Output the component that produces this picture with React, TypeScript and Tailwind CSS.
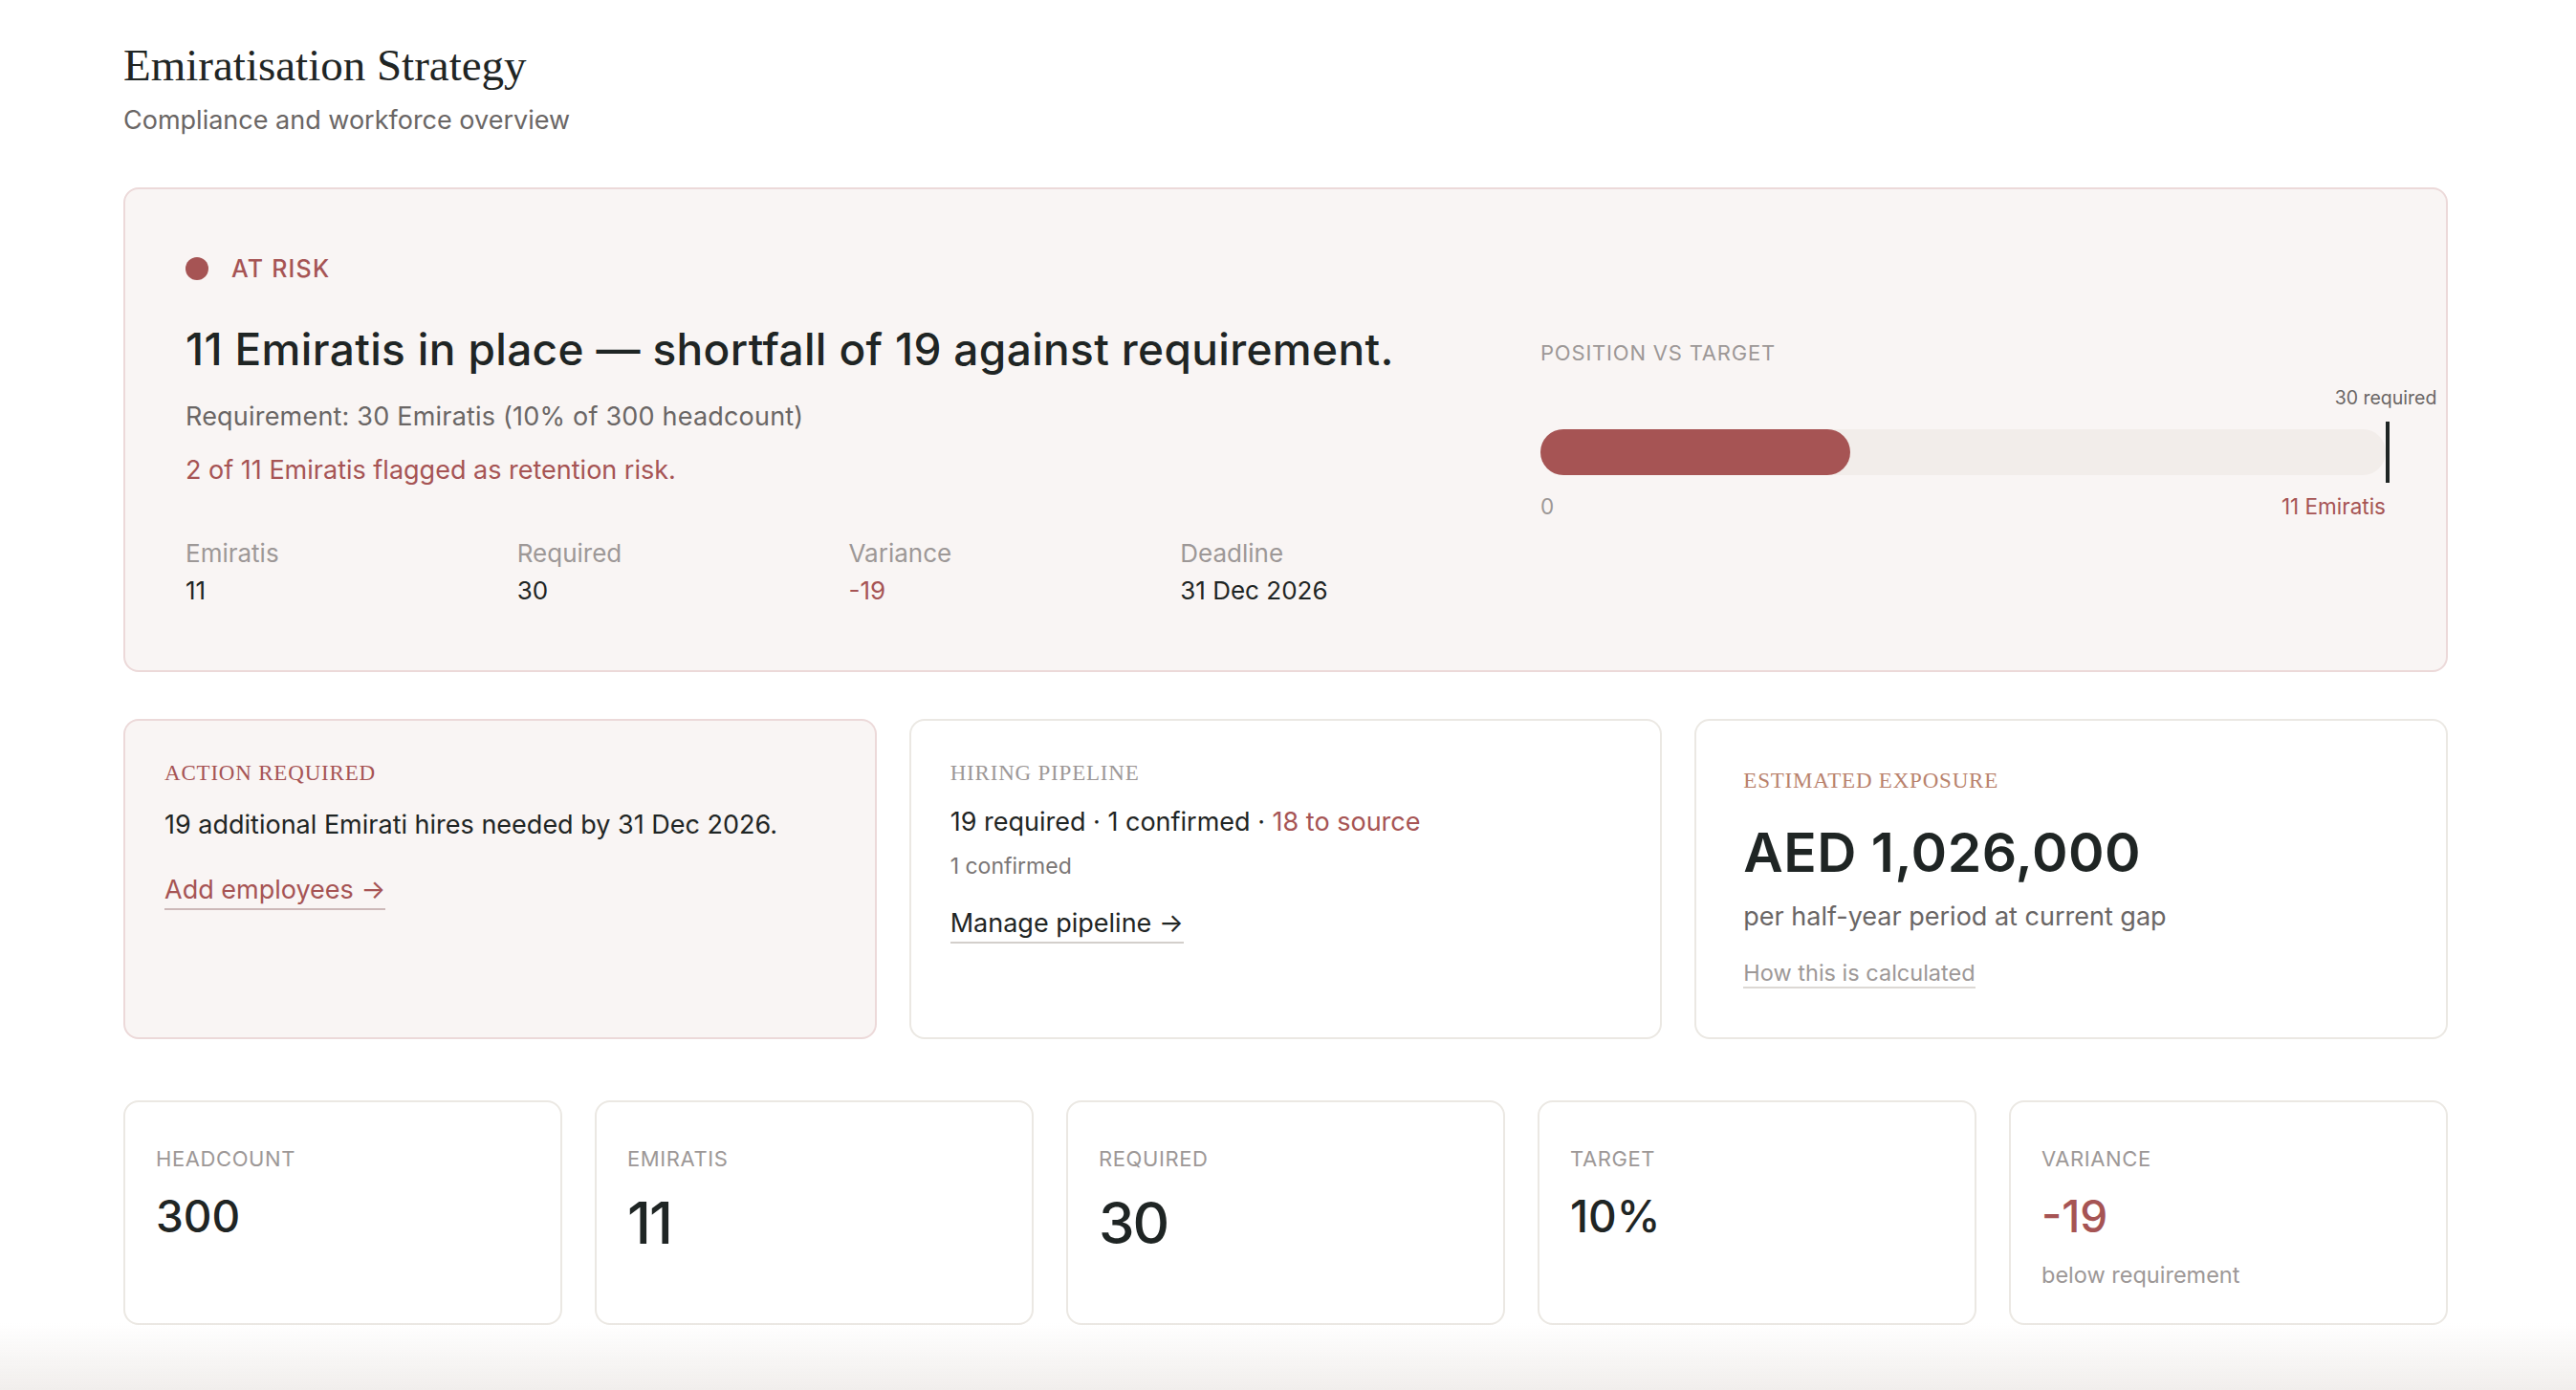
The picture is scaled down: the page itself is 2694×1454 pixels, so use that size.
const RED = 'text-[#a65454]';

const heroStats = [
  { label: 'Emiratis', value: '11' },
  { label: 'Required', value: '30' },
  { label: 'Variance', value: '-19', red: true },
  { label: 'Deadline', value: '31 Dec 2026' },
];

const stats = [
  { label: 'HEADCOUNT', value: '300', big: false },
  { label: 'EMIRATIS', value: '11', big: true },
  { label: 'REQUIRED', value: '30', big: true },
  { label: 'TARGET', value: '10%', big: false },
  { label: 'VARIANCE', value: '-19', big: false, red: true, note: 'below requirement' },
];

export default function App() {
  const current = 11;
  const required = 30;
  const pct = (current / required) * 100;

  return (
    <div className="relative min-h-screen bg-white font-['Inter',sans-serif] text-[#1f2524]">
      <div className="pl-[129px] pr-[134px] pt-[45px] pb-[64px]">
        {/* Header */}
        <h1 className="font-['Liberation_Serif',serif] text-[47px] leading-none font-normal">
          Emiratisation Strategy
        </h1>
        <p className="mt-[18px] text-[27px] leading-[1.2] text-[#6a6665]">Compliance and workforce overview</p>

        {/* Status hero */}
        <section className="mt-[54px] rounded-[16px] border-2 border-[#ecd9d9] bg-[#f9f5f4] px-[63px] pt-[68px] pb-[68px] grid grid-cols-[1fr_884px] gap-[30px] items-center">
          <div>
            <div className="flex items-center gap-[24px] h-[30px]">
              <span className="w-[24px] h-[24px] rounded-full bg-[#a65454]" />
              <span className={`text-[25px] leading-[1.2] font-medium tracking-[1.2px] ${RED}`}>AT RISK</span>
            </div>
            <h2 className="mt-[42px] text-[46px] leading-[1.2] font-medium tracking-[0.35px]">
              11 Emiratis in place — shortfall of 19 against requirement.
            </h2>
            <p className="mt-[26px] text-[27px] leading-[1.2] tracking-[0.2px] text-[#6a6665]">Requirement: 30 Emiratis (10% of 300 headcount)</p>
            <p className={`mt-[24px] text-[27px] leading-[1.2] ${RED}`}>2 of 11 Emiratis flagged as retention risk.</p>
            <div className="mt-[55px] grid grid-cols-4">
              {heroStats.map((s) => (
                <div key={s.label}>
                  <div className="text-[26px] leading-[1.2] text-[#9d9897]">{s.label}</div>
                  <div className={`mt-[7px] text-[26px] leading-[1.2] ${s.red ? RED : 'text-[#1f2524]'}`}>{s.value}</div>
                </div>
              ))}
            </div>
          </div>

          <div>
            <div className="text-[22px] leading-[1.2] tracking-[0.8px] text-[#9d9897]">POSITION VS TARGET</div>
            <div className="relative mt-[23px] h-[23px]">
              <span className="absolute right-0 top-0 translate-x-1/2 whitespace-nowrap text-[19.5px] leading-[1.2] text-[#6a6665]">
                {required} required
              </span>
            </div>
            <div className="relative mt-[21px] h-[48px] rounded-full bg-[#f2edea]">
              <div className="h-full rounded-full bg-[#a65454]" style={{ width: `${pct}%` }} />
              <span className="absolute right-[-4px] top-[-8px] w-[4px] h-[64px] bg-[#1f2524]" />
            </div>
            <div className="mt-[19px] flex justify-between text-[22.5px] leading-[1.2]">
              <span className="text-[#9d9897]">0</span>
              <span className={RED}>{current} Emiratis</span>
            </div>
          </div>
        </section>

        {/* Action cards */}
        <section className="mt-[49px] grid grid-cols-3 gap-[34px]">
          <div className="min-h-[335px] rounded-[16px] border-2 border-[#ecd9d9] bg-[#f9f5f4] p-[41px]">
            <div className={`font-['Liberation_Serif',serif] text-[23px] leading-[1.2] tracking-[0.8px] ${RED}`}>ACTION REQUIRED</div>
            <p className="mt-[22px] text-[27px] leading-[1.4]">19 additional Emirati hires needed by 31 Dec 2026.</p>
            <a className={`mt-[33px] inline-block border-b-2 border-[#cdb9b9] pb-[2px] text-[27px] leading-[1.2] ${RED}`}>
              Add employees →
            </a>
          </div>

          <div className="min-h-[335px] rounded-[16px] border-2 border-[#ebe8e3] bg-white p-[41px]">
            <div className="font-['Liberation_Serif',serif] text-[23px] leading-[1.2] tracking-[0.8px] text-[#9d9897]">HIRING PIPELINE</div>
            <p className="mt-[19px] text-[27px] leading-[1.4]">
              19 required · 1 confirmed · <span className={RED}>18 to source</span>
            </p>
            <p className="mt-[11px] text-[23px] leading-[1.4] text-[#7a7675]">1 confirmed</p>
            <a className="mt-[28px] inline-block border-b-2 border-[#d3cfcb] pb-[2px] text-[27px] leading-[1.2] text-[#1f2524]">
              Manage pipeline →
            </a>
          </div>

          <div className="min-h-[335px] rounded-[16px] border-2 border-[#ebe8e3] bg-white p-[49px]">
            <div className="font-['Liberation_Serif',serif] text-[23px] leading-[1.2] tracking-[0.8px] text-[#b9826c]">ESTIMATED EXPOSURE</div>
            <div className="mt-[31px] text-[57px] leading-[1.1] font-semibold tracking-[0.5px]">AED 1,026,000</div>
            <p className="mt-[16px] text-[27px] leading-[1.4] text-[#6a6665]">per half-year period at current gap</p>
            <a className="mt-[26px] inline-block border-b-2 border-[#dcd8d4] text-[23.5px] leading-[1.2] text-[#9d9897]">
              How this is calculated
            </a>
          </div>
        </section>

        {/* Stat tiles */}
        <section className="mt-[64px] grid grid-cols-5 gap-[34px]">
          {stats.map((s) => (
            <div key={s.label} className="min-h-[234px] rounded-[16px] border-2 border-[#ebe8e3] bg-white px-[32px] pt-[46px] pb-[36px]">
              <div className="text-[22px] leading-[1.2] tracking-[0.6px] text-[#9d9897]">{s.label}</div>
              <div
                className={`mt-[24px] leading-none font-medium ${s.big ? 'text-[60px] tracking-[-2px]' : 'text-[46px]'} ${s.red ? RED : 'text-[#1f2524]'}`}
              >
                {s.value}
              </div>
              {s.note && <div className="mt-[25px] text-[23.5px] leading-[1.2] text-[#9d9897]">{s.note}</div>}
            </div>
          ))}
        </section>
      </div>

      {/* bottom fade */}
      <div className="pointer-events-none fixed inset-x-0 bottom-0 h-[70px] bg-gradient-to-b from-white/0 to-[#f1eeec]" />
    </div>
  );
}
